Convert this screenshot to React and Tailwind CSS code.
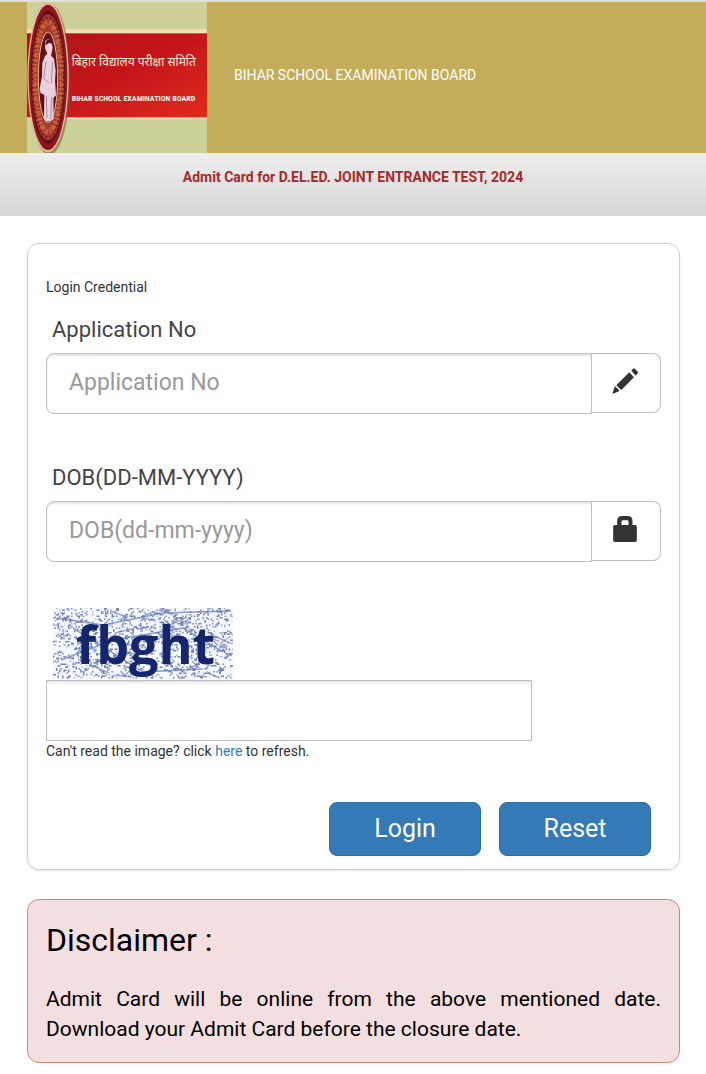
import { useState } from 'react';

const CAPTCHA_WIDTH = 180;
const CAPTCHA_HEIGHT = 71;

// Small seeded generator so the speckles stay the same between renders
const createRandom = (seed) => {
  let value = seed;
  return () => {
    value = (value * 16807) % 2147483647;
    return value / 2147483647;
  };
};

const buildSpeckles = (seed, count) => {
  const random = createRandom(seed);
  let path = '';
  for (let i = 0; i < count; i++) {
    const x = Math.floor(random() * 119) * 1.5;
    const y = Math.floor(random() * 47) * 1.5;
    const w = random() > 0.75 ? 3 : 1.5;
    path += `M${x} ${y}h${w}v1.5h-${w}z`;
  }
  return path;
};

const buildScratches = (seed, count) => {
  const random = createRandom(seed);
  let path = '';
  for (let i = 0; i < count; i++) {
    const x = Math.floor(random() * CAPTCHA_WIDTH);
    const y = Math.floor(random() * CAPTCHA_HEIGHT);
    const dx = Math.floor(random() * 36 - 18);
    const dy = Math.floor(random() * 18 - 9);
    path += `M${x} ${y}l${dx} ${dy}`;
  }
  return path;
};

const BoardLogo = () => (
  <svg viewBox="0 0 540 453" preserveAspectRatio="none" className="w-[180px] h-[151px] shrink-0" role="img" aria-label="Bihar School Examination Board logo">
    <defs>
      <linearGradient id="band" x1="0" y1="0" x2="1" y2="1">
        <stop offset="0" stopColor="#b01217" />
        <stop offset="0.5" stopColor="#c4161a" />
        <stop offset="1" stopColor="#e02a1c" />
      </linearGradient>
    </defs>
    <rect width="540" height="453" fill="#cdd199" />
    <rect y="82" width="540" height="270" fill="#f6dfb6" />
    <rect y="94" width="540" height="252" fill="url(#band)" />
    <ellipse cx="67" cy="231" rx="63" ry="227" fill="#6d5b3d" opacity="0.6" />
    <ellipse cx="63" cy="226" rx="62" ry="225" fill="#e9b99b" />
    <ellipse cx="63" cy="226" rx="58" ry="218" fill="#8e1620" />
    <ellipse cx="63" cy="226" rx="52" ry="200" fill="#641019" />
    <ellipse cx="63" cy="226" rx="49" ry="189" fill="#a53a2a" />
    <ellipse cx="63" cy="226" rx="40" ry="164" fill="none" stroke="#c4613a" strokeWidth="15" strokeDasharray="9 5 15 4 6 5" />
    <ellipse cx="63" cy="226" rx="46" ry="180" fill="none" stroke="#6d1a1c" strokeWidth="4" strokeDasharray="7 6" />
    <ellipse cx="63" cy="226" rx="29" ry="136" fill="#651019" stroke="#e8b795" strokeWidth="3" />
    <path d="M55 118q8-12 18 0l4 20-5 23 9 9 5 36-2 30 3 44-8 8 1 62-9 8-15 0-5-10 1-70-11-4-3-14 7-38 1-39 8-21 7-7-7-17z" fill="#ead0dd" />
    <path d="M57 178l-7 52 15 12M77 178l-4 65M58 282l2 66M74 285l-3 66" fill="none" stroke="#ae8aa6" strokeWidth="3" />
    <path d="M55 130q1-18 12-18 9 2 9 14l-9-4z" fill="#4e1322" />
    <text x="134" y="192" fontSize="36" fill="#f5e6d8" fontFamily="'Noto Sans Devanagari', 'Noto Sans', sans-serif">बिहार विद्यालय परीक्षा समिति</text>
    <text x="134" y="298" fontSize="24" fontWeight="700" fill="#fff3ea" fontFamily="'Liberation Sans Narrow', 'Roboto Condensed', 'DejaVu Sans Condensed', sans-serif">BIHAR SCHOOL EXAMINATION BOARD</text>
  </svg>
);

const PencilIcon = () => (
  <svg viewBox="0 0 78 78" className="w-[26px] h-[26px]" fill="#333" aria-hidden="true">
    <path d="M58 8l5-6q3-2 6 0l8 9q2 3 0 5l-6 7z" />
    <path d="M52 13l14 15-38 38-15-14z" />
    <path d="M9 54l14 15-22 9z" />
  </svg>
);

const LockIcon = () => (
  <svg viewBox="0 0 71 78" className="w-[24px] h-[26px]" fill="#333" aria-hidden="true">
    <path fillRule="evenodd" d="M12 27V15Q12 0 27 0H43Q58 0 58 15V27H66Q71 27 71 32V72Q71 78 66 78H5Q0 78 0 72V32Q0 27 5 27ZM25 27H46V17Q46 13 42 13H29Q25 13 25 17Z" />
  </svg>
);

const CaptchaImage = () => (
  <svg viewBox={`0 0 ${CAPTCHA_WIDTH} ${CAPTCHA_HEIGHT}`} className="block w-[180px] h-[71px]" role="img" aria-label="Captcha">
    <rect width={CAPTCHA_WIDTH} height={CAPTCHA_HEIGHT} fill="#f5f9ff" />
    <path d={buildSpeckles(4711, 900)} fill="#4c5d9f" opacity="0.75" />
    <path d={buildSpeckles(977, 400)} fill="#8b9bcd" opacity="0.7" />
    <path d={buildScratches(2203, 65)} fill="none" stroke="#5c6fb5" strokeWidth="1.5" opacity="0.6" />
    <path d="M4 10L50 17 110 5 178 3M8 52L60 32 130 20 170 44M20 20L90 64 150 61" fill="none" stroke="#6374b5" strokeWidth="1.5" opacity="0.7" />
    <text x="23" y="56" fontSize="52" fontWeight="700" fill="#14266c" fontFamily="'Open Sans', 'Noto Sans', sans-serif">fbght</text>
  </svg>
);

const CredentialField = ({ id, label, placeholder, icon, value, onChange }) => (
  <div>
    <label htmlFor={id} className="block pl-[6px] text-[22px] leading-8 text-[#444]">{label}</label>
    <div className="flex items-start mt-[7px]">
      <input
        id={id}
        type="text"
        value={value}
        onChange={(e) => onChange(e.target.value)}
        placeholder={placeholder}
        className="flex-1 min-w-0 h-[61px] px-[22px] pb-[3px] text-[23px] text-[#555] placeholder:text-[#999] bg-white border border-[#bfbfbf] rounded-l-lg shadow-[inset_0_2px_2px_rgba(0,0,0,0.1)] outline-none"
      />
      <span className="flex items-center justify-center w-[69px] h-[60px] pr-[2px] pb-[4px] border border-l-0 border-[#bfbfbf] rounded-r-lg">
        {icon}
      </span>
    </div>
  </div>
);

const App = () => {
  const [applicationNo, setApplicationNo] = useState('');
  const [dob, setDob] = useState('');
  const [captcha, setCaptcha] = useState('');

  const handleReset = () => {
    setApplicationNo('');
    setDob('');
    setCaptcha('');
  };

  return (
    <div className="bg-white text-[#333] font-[Roboto,sans-serif]">
      {/* Header */}
      <header className="flex items-center gap-[27px] px-[27px] bg-[#c3ad5a] border-t-2 border-[#dfdfdf] text-white">
        <BoardLogo />
        <span className="text-[14px] leading-5 pb-[6px]">BIHAR SCHOOL EXAMINATION BOARD</span>
      </header>
      <div className="h-[63px] pt-[14px] text-center bg-gradient-to-b from-[#eeeeee] to-[#d6d6d6]">
        <h1 className="text-[14px] leading-5 font-bold text-[#a52a2a]">Admit Card for D.EL.ED. JOINT ENTRANCE TEST, 2024</h1>
      </div>

      <main className="pl-[27px] pr-[26px] pt-[27px] pb-3">
        {/* Login form */}
        <form
          onSubmit={(e) => e.preventDefault()}
          className="px-[18px] pt-[33px] pb-[13px] border border-[#d0d0d0] rounded-xl shadow-[0_1px_2px_rgba(0,0,0,0.1)]"
        >
          <p className="text-[14px] leading-5">Login Credential</p>
          <div className="mt-[17px] flex flex-col gap-12">
            <CredentialField
              id="applicationNo"
              label="Application No"
              placeholder="Application No"
              icon={<PencilIcon />}
              value={applicationNo}
              onChange={setApplicationNo}
            />
            <CredentialField
              id="dob"
              label="DOB(DD-MM-YYYY)"
              placeholder="DOB(dd-mm-yyyy)"
              icon={<LockIcon />}
              value={dob}
              onChange={setDob}
            />
          </div>

          <div className="mt-[46px]">
            <div className="pl-[7px]">
              <CaptchaImage />
            </div>
            <input
              type="text"
              aria-label="Captcha text"
              value={captcha}
              onChange={(e) => setCaptcha(e.target.value)}
              className="block w-[79%] h-[61px] mt-px px-[22px] text-[23px] border border-[#bfbfbf] shadow-[inset_0_2px_2px_rgba(0,0,0,0.1)] outline-none"
            />
            <p className="text-[14px] leading-5">
              Can't read the image? click <a href="#" className="text-[#337ab7]">here</a> to refresh.
            </p>
          </div>

          <div className="flex justify-end gap-[18px] mt-[41px] pr-[10px]">
            <button type="submit" className="w-[152px] h-[54px] text-[25px] text-white bg-[#337ab7] border border-[#2e6da4] rounded-lg">Login</button>
            <button type="button" onClick={handleReset} className="w-[152px] h-[54px] text-[25px] text-white bg-[#337ab7] border border-[#2e6da4] rounded-lg">Reset</button>
          </div>
        </form>

        {/* Disclaimer */}
        <section className="mt-[29px] px-[18px] pt-5 pb-[18px] text-black bg-[#f3dfdf] border border-[#d98080] rounded-xl">
          <h2 className="text-[32px] leading-10">Disclaimer :</h2>
          <p className="mt-6 text-[21px] leading-[30px] text-justify">
            Admit Card will be online from the above mentioned date. Download your Admit Card before the closure date.
          </p>
        </section>
      </main>
    </div>
  );
};

export default App;
